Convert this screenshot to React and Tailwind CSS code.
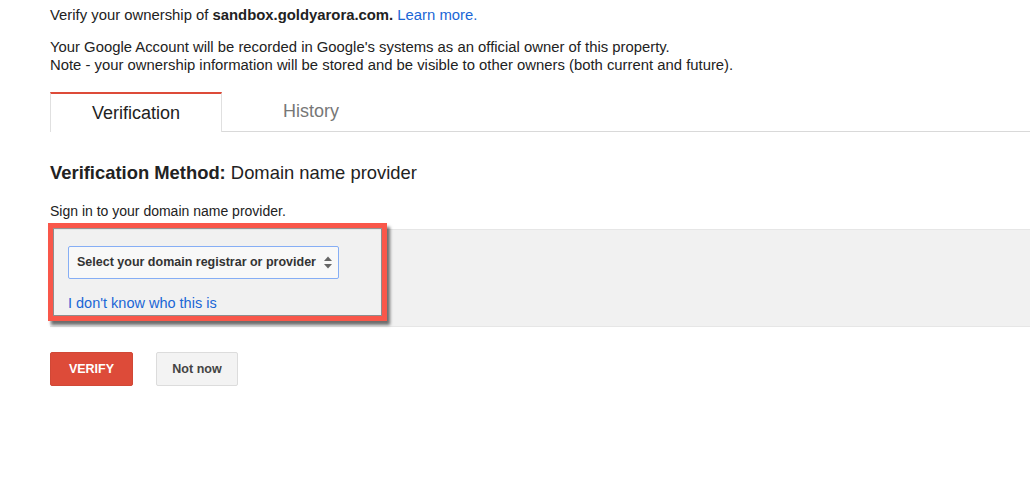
export default function App() {
  return (
    <div className="relative w-[1030px] h-[501px] bg-white font-['Liberation_Sans',Arial,sans-serif] text-[#222] overflow-hidden">
      <div className="pl-[50px]">
        <p className="pt-[6px] text-[14.85px] leading-[18px]">
          Verify your ownership of <span className="font-bold">sandbox.goldyarora.com.</span>{' '}
          <a className="text-[#1a66d6]">Learn more.</a>
        </p>
        <p className="mt-[14px] text-[14.85px] leading-[18px]">
          Your Google Account will be recorded in Google's systems as an official owner of this property.
          <br />
          Note - your ownership information will be stored and be visible to other owners (both current and future).
        </p>

        <div className="mt-[18px] flex">
          <div className="w-[172px] h-[40px] border-t-2 border-t-[#dd4b39] border-l border-r border-[#e0e0e0] flex items-center justify-center text-[18px] text-[#222]">
            Verification
          </div>
          <div className="flex-1 h-[40px] border-b border-[#d9d9d9] flex items-center">
            <span className="w-[178px] text-center text-[18px] text-[#777]">History</span>
          </div>
        </div>

        <h2 className="mt-[30px] text-[18.4px] leading-[22px]">
          <span className="font-bold">Verification Method:</span> Domain name provider
        </h2>
        <p className="mt-[18px] text-[14px] leading-[18px]">Sign in to your domain name provider.</p>

        <div className="mt-[9px] h-[98px] bg-[#f1f1f1] border-t border-b border-[#e6e6e6] pl-[18px] pt-[16px]">
          <div className="w-[271px] h-[33px] bg-[#f8f8f8] border border-[#86aef5] rounded-[2px] flex items-center justify-between pl-[8px] pr-[5px]">
            <span className="text-[12.5px] font-bold text-[#333]">Select your domain registrar or provider</span>
            <svg width="10" height="15" viewBox="0 0 10 15">
              <path d="M5 1.5 L9 6 L1 6 Z" fill="#666" />
              <path d="M5 13.5 L9 9 L1 9 Z" fill="#666" />
            </svg>
          </div>
          <a className="block mt-[15px] text-[14.5px] leading-[18px] text-[#1a66d6]">I don't know who this is</a>
        </div>

        <div className="mt-[25px] flex gap-[23px]">
          <button className="w-[83px] h-[34px] bg-[#dd4b39] border border-[#d14836] rounded-[2px] text-white text-[12.5px] font-bold">
            VERIFY
          </button>
          <button className="w-[82px] h-[34px] bg-[#f3f3f3] border border-[#dcdcdc] rounded-[2px] text-[#444] text-[12.5px] font-bold">
            Not now
          </button>
        </div>
      </div>

      <div className="absolute left-[48px] top-[223px] w-[339px] h-[98px] border-[5px] border-[#f9574a] shadow-[inset_0_0_0_1px_rgba(60,60,60,0.55),3px_4px_3px_rgba(0,0,0,0.55)]" />
    </div>
  );
}
